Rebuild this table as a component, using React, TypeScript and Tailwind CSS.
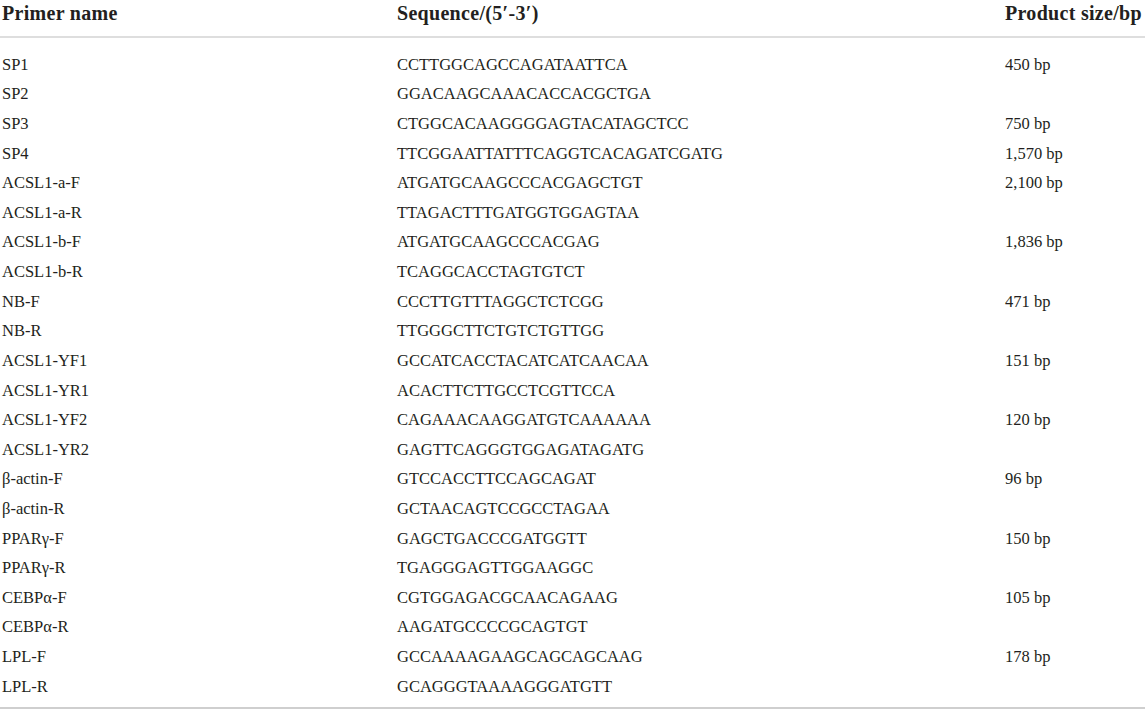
const rows: [string, string, string][] = [
  ['SP1', 'CCTTGGCAGCCAGATAATTCA', '450 bp'],
  ['SP2', 'GGACAAGCAAACACCACGCTGA', ''],
  ['SP3', 'CTGGCACAAGGGGAGTACATAGCTCC', '750 bp'],
  ['SP4', 'TTCGGAATTATTTCAGGTCACAGATCGATG', '1,570 bp'],
  ['ACSL1-a-F', 'ATGATGCAAGCCCACGAGCTGT', '2,100 bp'],
  ['ACSL1-a-R', 'TTAGACTTTGATGGTGGAGTAA', ''],
  ['ACSL1-b-F', 'ATGATGCAAGCCCACGAG', '1,836 bp'],
  ['ACSL1-b-R', 'TCAGGCACCTAGTGTCT', ''],
  ['NB-F', 'CCCTTGTTTAGGCTCTCGG', '471 bp'],
  ['NB-R', 'TTGGGCTTCTGTCTGTTGG', ''],
  ['ACSL1-YF1', 'GCCATCACCTACATCATCAACAA', '151 bp'],
  ['ACSL1-YR1', 'ACACTTCTTGCCTCGTTCCA', ''],
  ['ACSL1-YF2', 'CAGAAACAAGGATGTCAAAAAA', '120 bp'],
  ['ACSL1-YR2', 'GAGTTCAGGGTGGAGATAGATG', ''],
  ['β-actin-F', 'GTCCACCTTCCAGCAGAT', '96 bp'],
  ['β-actin-R', 'GCTAACAGTCCGCCTAGAA', ''],
  ['PPARγ-F', 'GAGCTGACCCGATGGTT', '150 bp'],
  ['PPARγ-R', 'TGAGGGAGTTGGAAGGC', ''],
  ['CEBPα-F', 'CGTGGAGACGCAACAGAAG', '105 bp'],
  ['CEBPα-R', 'AAGATGCCCCGCAGTGT', ''],
  ['LPL-F', 'GCCAAAAGAAGCAGCAGCAAG', '178 bp'],
  ['LPL-R', 'GCAGGGTAAAAGGGATGTT', ''],
]

const App = () => {
  return (
    <div className="w-[1145px] h-[712px] bg-white text-[#231f20] font-['Liberation_Serif',serif]">
      <div className="grid grid-cols-[395px_608px_1fr] pl-[2px] h-[36px] items-start pt-[1px] text-[20px] font-bold leading-[24px] tracking-[0.3px]">
        <div>Primer name</div>
        <div>Sequence/(5′-3′)</div>
        <div className="whitespace-nowrap">Product size/bp</div>
      </div>
      <div className="h-[2px] bg-[#dedede]" />
      <div className="pt-[12px] pb-[6px]">
        {rows.map(([name, seq, size]) => (
          <div
            key={name}
            className="grid grid-cols-[395px_608px_1fr] pl-[2px] h-[29.62px] items-center text-[16.5px] leading-[20px]"
          >
            <div>{name}</div>
            <div>{seq}</div>
            <div>{size}</div>
          </div>
        ))}
      </div>
      <div className="h-[2px] bg-[#cfcfcf]" />
    </div>
  )
}

export default App
